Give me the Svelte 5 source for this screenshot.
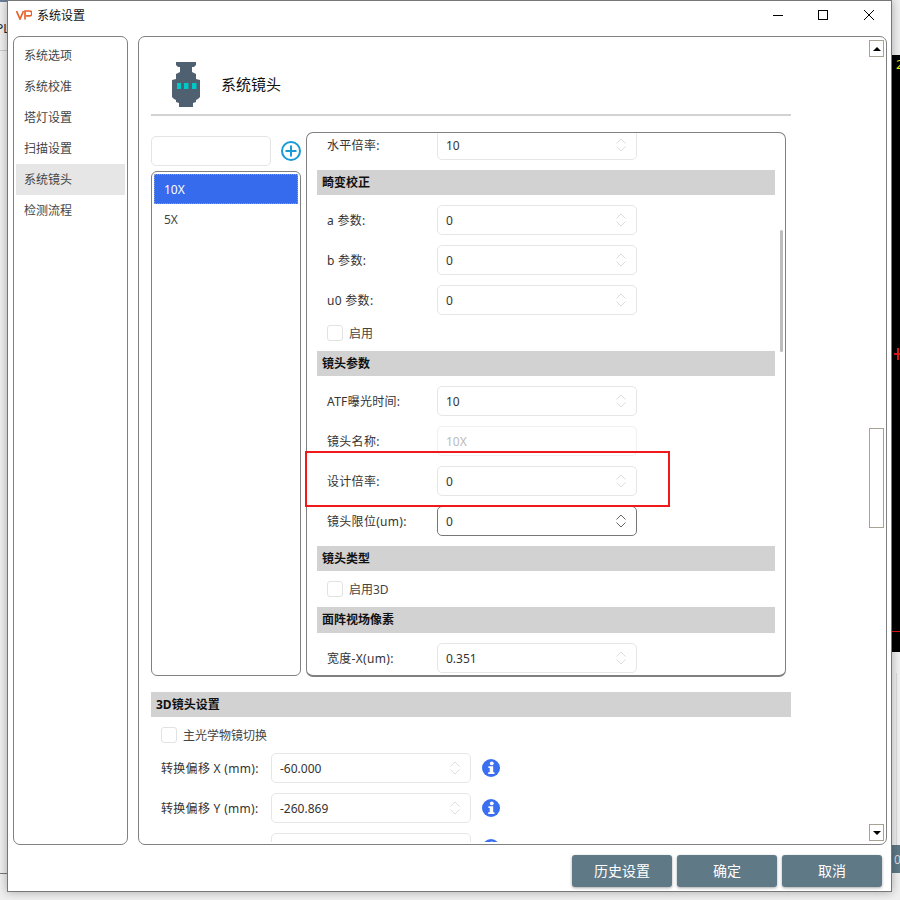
<script>
    const navItems = ['系统选项', '系统校准', '塔灯设置', '扫描设置', '系统镜头', '检测流程'];
    const lenses = ['10X', '5X'];
</script>

{#snippet spin(label, value, cls = '')}
    <div class="row {cls}">
        <span class="label">{label}</span>
        <div class="spin">
            <span>{value}</span>
            <svg class="arrows" width="10" height="14" viewBox="0 0 10 14" fill="none">
                <path d="M.5 5.5 5 1l4.5 4.5M.5 8.5 5 13l4.5-4.5" />
            </svg>
        </div>
    </div>
{/snippet}

{#snippet check(label)}
    <div class="check"><span class="box"></span><span class="nudge">{label}</span></div>
{/snippet}

{#snippet info()}
    <svg class="info" width="18" height="18" viewBox="0 0 18 18">
        <circle cx="9" cy="9" r="9" fill="#3a6ff0" />
        <circle cx="9.8" cy="4.4" r="1.9" fill="#fff" />
        <path d="M6.4 7.3h4.8v6h1.3v1.8H6.2v-1.8h1.5V9H6.4z" fill="#fff" />
    </svg>
{/snippet}

<div class="desktop">
    <div class="behind-left">
        <span class="corner"></span>
        <span class="app-name">PL</span>
        <span class="rule-top"></span>
        <span class="rule-bottom"></span>
    </div>
    <div class="behind-right">
        <div class="black">
            <span class="yellow">2</span>
            <span class="cross"></span>
            <span class="tick"></span>
        </div>
        <div class="grey"></div>
        <div class="slate">0</div>
    </div>

    <div class="window">
        <header class="titlebar">
            <svg class="logo" width="16" height="10" viewBox="0 0 16 10" fill="none">
                <path d="M.5 1 4 9l3.5-8" stroke="#e8622a" stroke-width="1.7" />
                <path d="M9 9.5V1h4.5a2.3 2.3 0 0 1 0 4.8H10" stroke="#e8622a" stroke-width="1.7" />
            </svg>
            <span class="nudge">系统设置</span>
            <div class="controls">
                <svg width="10" height="10" viewBox="0 0 10 10"><path d="M0 5.5h10" stroke="#000" /></svg>
                <svg width="10" height="10" viewBox="0 0 10 10"><rect x=".5" y=".5" width="9" height="9" fill="none" stroke="#000" /></svg>
                <svg width="10" height="10" viewBox="0 0 10 10"><path d="M0 0l10 10M10 0 0 10" stroke="#000" /></svg>
            </div>
        </header>

        <div class="main">
            <nav class="nav">
                {#each navItems as item}
                    <div class="nav-item" class:current={item === '系统镜头'}>{item}</div>
                {/each}
            </nav>

            <section class="panel">
                <div class="content">
                    <div class="heading">
                        <svg width="28" height="45" viewBox="0 0 28 45">
                            <path fill="#4f6070" d="M4 0h20v3l-2 2h-2v5l4 2v5l4 1v17l-2 2-2 1v2l-3 1v4H7v-4l-3-1v-2l-2-1-2-2V18l4-1v-5l4-2V5H6L4 3z" />
                            <rect x="5" y="21" width="4" height="6" fill="#00c8c8" />
                            <rect x="12" y="21" width="4.5" height="6" fill="#00c8c8" />
                            <rect x="20" y="21" width="4.5" height="6" fill="#00c8c8" />
                        </svg>
                        <span>系统镜头</span>
                    </div>

                    <div class="lens-area">
                        <div class="lens-col">
                            <div class="search-row">
                                <div class="search"></div>
                                <svg width="20" height="20" viewBox="0 0 20 20" fill="none">
                                    <circle cx="10" cy="10" r="9" stroke="#1a9ad6" stroke-width="2" />
                                    <path d="M10 4.5v11M4.5 10h11" stroke="#1a9ad6" stroke-width="2" />
                                </svg>
                            </div>
                            <div class="lens-list">
                                {#each lenses as lens, i}
                                    <div class="lens-item" class:picked={i === 0}>{lens}</div>
                                {/each}
                            </div>
                        </div>

                        <div class="params">
                            <div class="params-inner">
                                {@render spin('水平倍率:', '10')}
                                <div class="band">畸变校正</div>
                                {@render spin('a 参数:', '0')}
                                {@render spin('b 参数:', '0')}
                                {@render spin('u0 参数:', '0')}
                                {@render check('启用')}
                                <div class="band">镜头参数</div>
                                {@render spin('ATF曝光时间:', '10')}
                                <div class="row disabled">
                                    <span class="label">镜头名称:</span>
                                    <div class="spin"><span>10X</span></div>
                                </div>
                                {@render spin('设计倍率:', '0')}
                                {@render spin('镜头限位(um):', '0', 'focus')}
                                <div class="band">镜头类型</div>
                                {@render check('启用3D')}
                                <div class="band tall">面阵视场像素</div>
                                {@render spin('宽度-X(um):', '0.351')}
                            </div>
                            <div class="inner-thumb"></div>
                        </div>

                        <div class="annotation"></div>
                    </div>

                    <div class="band wide">3D镜头设置</div>
                    <div class="lower">
                        {@render check('主光学物镜切换')}
                        <div class="info-row">{@render spin('转换偏移 X (mm):', '-60.000')}{@render info()}</div>
                        <div class="info-row">{@render spin('转换偏移 Y (mm):', '-260.869')}{@render info()}</div>
                        <div class="info-row">{@render spin('', '')}{@render info()}</div>
                    </div>
                </div>

                <div class="scrollbar">
                    <div class="step"><span class="up"></span></div>
                    <div class="thumb"></div>
                    <div class="step"><span class="down"></span></div>
                </div>
            </section>
        </div>

        <footer class="footer">
            <button class="action">历史设置</button>
            <button class="action">确定</button>
            <button class="action">取消</button>
        </footer>
    </div>
</div>

<style>
    :global(body) {
        margin: 0;
    }
    .desktop {
        position: relative;
        width: 900px;
        height: 900px;
        overflow: hidden;
        font-family: "Noto Sans", "Noto Sans CJK SC", sans-serif;
        font-size: 12px;
        line-height: 1;
        color: #333;
        background: #efefef;
    }
    .behind-left span,
    .behind-right div,
    .black span {
        position: absolute;
    }
    .corner {
        left: 0;
        top: 0;
        width: 7px;
        height: 2px;
        background: #6a7f96;
    }
    .app-name {
        left: -4px;
        top: 23px;
        color: #222;
    }
    .rule-top {
        left: 0;
        top: 50px;
        width: 7px;
        height: 1px;
        background: #c8c8c8;
    }
    .rule-bottom {
        left: 0;
        top: 873px;
        width: 7px;
        height: 1px;
        background: #777;
    }
    .behind-right div {
        left: 892px;
        width: 8px;
    }
    .behind-right .black {
        top: 55px;
        height: 597px;
        background: #000;
        overflow: hidden;
    }
    .yellow {
        left: 4px;
        top: 3px;
        color: #f2f200;
        font-size: 13px;
    }
    .cross {
        left: 2px;
        top: 298px;
        width: 6px;
        height: 2px;
        background: #e01818;
    }
    .cross::after {
        content: "";
        position: absolute;
        left: 3px;
        top: -5px;
        width: 2px;
        height: 12px;
        background: #e01818;
    }
    .tick {
        left: 0;
        top: 576px;
        width: 8px;
        height: 1px;
        background: #e01818;
    }
    .behind-right .grey {
        top: 652px;
        height: 193px;
        background: #f2f2f2;
    }
    .behind-right .grey::after {
        content: "";
        position: absolute;
        left: 4px;
        top: 21px;
        width: 1px;
        height: 172px;
        background: #dcdcdc;
    }
    .behind-right .slate {
        top: 845px;
        height: 28px;
        background: #5e7886;
        color: #ddd;
        line-height: 30px;
        text-indent: 2px;
    }
    .window {
        position: relative;
        margin-left: 7px;
        width: 885px;
        height: 892px;
        box-sizing: border-box;
        background: #fff;
        border: 1px solid #777;
        display: flex;
        flex-direction: column;
        box-shadow: 0 0 9px rgba(0, 0, 0, 0.3);
    }
    .titlebar {
        height: 35px;
        flex: none;
        box-sizing: border-box;
        display: flex;
        align-items: center;
        gap: 5px;
        padding: 0 17px 7px 8px;
        color: #111;
    }
    .nudge {
        padding-top: 2px;
    }
    .controls {
        margin-left: auto;
        display: flex;
        gap: 35px;
    }
    .controls svg:last-child {
        margin-left: 1px;
    }
    .main {
        flex: none;
        height: 809px;
        display: flex;
        gap: 10px;
        padding: 0 4px 0 5px;
    }
    .nav {
        width: 115px;
        flex: none;
        box-sizing: border-box;
        padding: 3px 2px;
        border: 1px solid #808080;
        border-radius: 7px;
    }
    .nav-item {
        height: 31px;
        line-height: 31px;
        padding-left: 8px;
        color: #444;
    }
    .nav-item.current {
        background: #e6e6e6;
    }
    .panel {
        flex: 1;
        box-sizing: border-box;
        border: 1px solid #808080;
        border-radius: 7px;
        display: flex;
        justify-content: space-between;
        padding: 0 2px 2px 12px;
    }
    .content {
        width: 640px;
        flex: none;
        overflow: hidden;
    }
    .heading {
        height: 79px;
        box-sizing: border-box;
        border-bottom: 2px solid #d2d2d2;
        display: flex;
        align-items: center;
        gap: 21px;
        padding: 18px 0 0 21px;
        font-size: 15px;
        color: #111;
    }
    .lens-area {
        position: relative;
        display: flex;
        gap: 5px;
        margin-top: 16px;
    }
    .lens-col {
        width: 150px;
        flex: none;
        padding-top: 4px;
    }
    .search-row {
        display: flex;
        align-items: center;
        gap: 10px;
        width: 160px;
    }
    .search {
        width: 120px;
        height: 30px;
        box-sizing: border-box;
        border: 1px solid #e4e4e4;
        border-radius: 5px;
    }
    .lens-list {
        margin-top: 5px;
        height: 505px;
        box-sizing: border-box;
        border: 1px solid #808080;
        border-radius: 6px;
        padding: 2px;
    }
    .lens-item {
        height: 30px;
        line-height: 32px;
        padding-left: 10px;
        color: #444;
    }
    .lens-item.picked {
        background: #356bec;
        color: #fff;
        outline: 1px dotted #8f9fc0;
        outline-offset: -1px;
    }
    .params {
        position: relative;
        width: 480px;
        height: 545px;
        flex: none;
        box-sizing: border-box;
        border: 1px solid #808080;
        border-bottom-width: 2px;
        border-radius: 7px;
        overflow: hidden;
    }
    .params-inner {
        display: flex;
        flex-direction: column;
        gap: 10px;
        margin-top: -3px;
        padding: 0 10px;
    }
    .band {
        height: 25px;
        line-height: 25px;
        background: #d2d2d2;
        padding-left: 5px;
        font-weight: 700;
        color: #111;
    }
    .band.tall {
        height: 26px;
    }
    .band.wide {
        margin-top: 15px;
    }
    .row {
        display: flex;
        align-items: center;
        height: 30px;
        padding-left: 10px;
    }
    .label {
        width: 110px;
        flex: none;
        padding-top: 2px;
        letter-spacing: 0.3px;
    }
    .spin {
        position: relative;
        width: 200px;
        height: 30px;
        box-sizing: border-box;
        border: 1px solid #e6e6e6;
        border-radius: 5px;
        display: flex;
        align-items: center;
        padding: 2px 0 0 8px;
    }
    .arrows {
        position: absolute;
        right: 10px;
        top: 7px;
        stroke: #dcdcdc;
    }
    .disabled .spin {
        border-color: #f0f0f0;
        color: #bbb;
    }
    .row.focus .spin {
        border-color: #777;
    }
    .row.focus .arrows {
        stroke: #666;
    }
    .annotation {
        position: absolute;
        left: 154px;
        top: 319px;
        width: 365px;
        height: 56px;
        box-sizing: border-box;
        border: 2px solid #f01818;
    }
    .check {
        display: flex;
        align-items: center;
        gap: 6px;
        height: 16px;
        padding-left: 10px;
        color: #444;
    }
    .box {
        width: 16px;
        height: 16px;
        box-sizing: border-box;
        border: 1px solid #e2e2e2;
        border-radius: 3px;
    }
    .inner-thumb {
        position: absolute;
        right: 2px;
        top: 97px;
        width: 3px;
        height: 122px;
        background: #bdbdbd;
        border-radius: 2px;
    }
    .lower {
        display: flex;
        flex-direction: column;
        gap: 10px;
        padding-top: 10px;
    }
    .info-row {
        display: flex;
        align-items: center;
        gap: 11px;
    }
    .scrollbar {
        width: 15px;
        flex: none;
        margin-top: 3px;
        height: 801px;
        position: relative;
        display: flex;
        flex-direction: column;
        justify-content: space-between;
    }
    .step {
        height: 17px;
        box-sizing: border-box;
        border: 1px solid #a8a294;
        display: flex;
        align-items: center;
        justify-content: center;
    }
    .up {
        border: solid transparent;
        border-width: 0 4px 4px;
        border-bottom-color: #000;
    }
    .down {
        border: solid transparent;
        border-width: 4px 4px 0;
        border-top-color: #000;
    }
    .thumb {
        position: absolute;
        left: 0;
        top: 388px;
        width: 15px;
        height: 100px;
        box-sizing: border-box;
        border: 1px solid #a8a294;
    }
    .footer {
        flex: 1;
        display: flex;
        justify-content: flex-end;
        gap: 5px;
        padding: 10px 9px 0 0;
    }
    .action {
        width: 100px;
        height: 32px;
        border: none;
        border-radius: 3px;
        background: #607986;
        color: #fff;
        font: inherit;
        font-size: 14px;
        box-shadow: 0 1px 3px rgba(0, 0, 0, 0.35);
    }
</style>
